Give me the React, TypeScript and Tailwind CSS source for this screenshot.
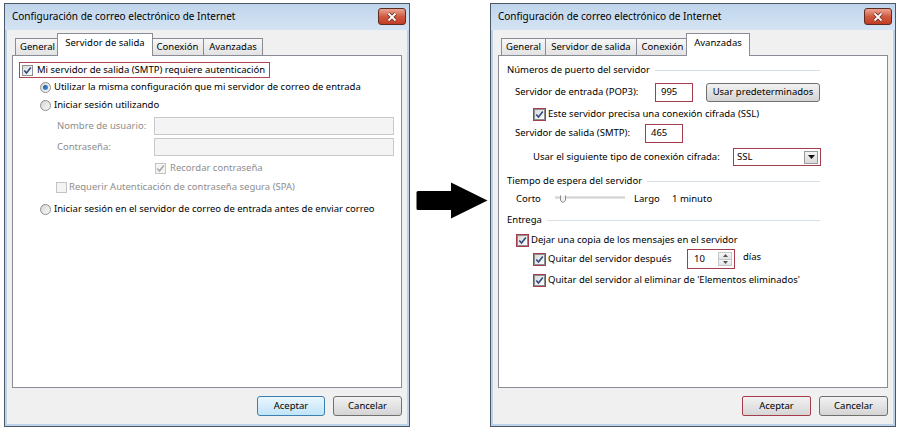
import React from 'react'

const FONT = "font-['Noto_Sans',sans-serif]"

const TABS = [
  { label: 'General', w: 'w-[45px]', ws: 'w-[49px]' },
  { label: 'Servidor de salida', w: 'w-[92px]', ws: 'w-[96px]' },
  { label: 'Conexión', w: 'w-[53px]', ws: 'w-[57px]' },
  { label: 'Avanzadas', w: 'w-[60px]', ws: 'w-[64px]' },
]

function Check({ color }: { color: string }) {
  return (
    <svg width="9" height="9" viewBox="0 0 9 9" className="block">
      <path d="M1.3 4.4 L3.5 7 L7.8 1.4" fill="none" stroke={color} strokeWidth="1.6" />
    </svg>
  )
}

function Checkbox({ checked, disabled, red }: { checked?: boolean; disabled?: boolean; red?: boolean }) {
  const box = (
    <span
      className={`flex h-[11px] w-[11px] shrink-0 items-center justify-center border ${
        disabled ? 'border-[#c4c4c4] bg-[#f4f4f4]' : 'border-[#8e8f8f] bg-gradient-to-br from-[#d9d9d9] to-white'
      }`}
    >
      {checked && <Check color={disabled ? '#a9a9a9' : '#2a4c82'} />}
    </span>
  )
  if (red) return <span className="flex shrink-0 border border-[#a53c4b]">{box}</span>
  return box
}

function Radio({ checked }: { checked?: boolean }) {
  return (
    <span className="flex h-[11px] w-[11px] shrink-0 items-center justify-center rounded-full border border-[#8e8f8f] bg-gradient-to-br from-[#d4d4d4] to-[#fbfbfb]">
      {checked && <span className="h-[5px] w-[5px] rounded-full bg-gradient-to-br from-[#154f96] to-[#4f9ee2]" />}
    </span>
  )
}

function Group({ label }: { label: string }) {
  return (
    <div className="flex h-[16px] w-[313px] items-center">
      <span>{label}</span>
      <span className="ml-[5px] h-px flex-1 bg-[#d5dfe5]" />
    </div>
  )
}

function CloseButton() {
  return (
    <div className="mt-[4px] flex h-[17px] w-[28px] items-center justify-center rounded-[3px] border border-[#5e2b22] bg-gradient-to-b from-[#e9a593] via-[#d05a40] to-[#c13c24]">
      <svg width="12" height="10" viewBox="0 0 12 10">
        <path d="M2.5 1.5 L9.5 8.5 M9.5 1.5 L2.5 8.5" stroke="#6a2c22" strokeWidth="3.4" />
        <path d="M2.5 1.5 L9.5 8.5 M9.5 1.5 L2.5 8.5" stroke="white" strokeWidth="1.8" />
      </svg>
    </div>
  )
}

function Tabs({ active }: { active: number }) {
  return (
    <div className="flex h-[22px] items-end pl-[3px]">
      {TABS.map((t, i) =>
        i === active ? (
          <div
            key={t.label}
            className={`relative z-10 -mx-[2px] -mb-px flex h-[23px] ${t.ws} shrink-0 justify-center border border-b-0 border-[#898c95] bg-white pt-[2px]`}
          >
            {t.label}
          </div>
        ) : (
          <div
            key={t.label}
            className={`-mr-px flex h-[17px] ${t.w} shrink-0 items-center justify-center border border-b-0 border-[#898c95] bg-gradient-to-b from-[#f7f7f7] to-[#e2e2e2]`}
          >
            {t.label}
          </div>
        )
      )}
    </div>
  )
}

function Dialog({ active, okRed, children }: { active: number; okRed?: boolean; children: React.ReactNode }) {
  return (
    <div className="flex h-[424px] w-[406px] shrink-0 flex-col border border-[#4a5866] bg-[#bcd3ea]">
      <div className="flex h-[26px] shrink-0 items-start justify-between bg-gradient-to-b from-[#bfd4eb] to-[#d5e4f4] pl-[7px] pr-[3px]">
        <span className="mt-[5px] text-[10px]">Configuración de correo electrónico de Internet</span>
        <CloseButton />
      </div>
      <div className="mx-[2px] mb-[2px] flex flex-1 flex-col bg-[#f0f0f0] px-[5px] pb-[8px] pt-[3px]">
        <Tabs active={active} />
        <div className="flex-1 border border-[#898c95] bg-white">{children}</div>
        <div className="mt-[8px] flex justify-end gap-[8px]">
          {okRed ? (
            <button className="h-[20px] w-[69px] rounded-[2px] border border-[#a53c4b] bg-gradient-to-b from-[#f2f2f2] to-[#d6d6d6]">
              Aceptar
            </button>
          ) : (
            <button className="h-[20px] w-[68px] rounded-[3px] border border-[#3c7fb1] bg-gradient-to-b from-[#eaf6fd] to-[#bfe4f8]">
              Aceptar
            </button>
          )}
          <button className="h-[20px] w-[69px] rounded-[3px] border border-[#707070] bg-gradient-to-b from-[#f2f2f2] to-[#d4d4d4]">
            Cancelar
          </button>
        </div>
      </div>
    </div>
  )
}

function Field({ value, w }: { value: string; w: string }) {
  return (
    <span className={`flex h-[19px] ${w} items-center border border-[#a53c4b] bg-white pl-[5px]`}>{value}</span>
  )
}

function Select() {
  return (
    <span className="flex h-[18px] w-[88px] items-center justify-between border border-[#a53c4b] bg-white pl-[3px] pr-[2px]">
      <span>SSL</span>
      <span className="flex h-[13px] w-[14px] items-center justify-center border border-[#9a9a9a] bg-gradient-to-b from-[#f4f4f4] to-[#d9d9d9]">
        <svg width="7" height="4" viewBox="0 0 7 4">
          <path d="M0 0 H7 L3.5 4 Z" fill="#111" />
        </svg>
      </span>
    </span>
  )
}

function Spin() {
  return (
    <span className="flex h-[20px] w-[48px] items-stretch border border-[#a53c4b] bg-white">
      <span className="flex flex-1 items-center pl-[6px]">10</span>
      <span className="my-[2px] mr-[2px] flex w-[14px] flex-col border border-[#c6c6c6]">
        <span className="flex flex-1 items-center justify-center border-b border-[#c6c6c6] bg-gradient-to-b from-[#f6f6f6] to-[#e4e4e4]">
          <svg width="5" height="3" viewBox="0 0 5 3">
            <path d="M0 3 H5 L2.5 0 Z" fill="#555" />
          </svg>
        </span>
        <span className="flex flex-1 items-center justify-center bg-gradient-to-b from-[#f6f6f6] to-[#e4e4e4]">
          <svg width="5" height="3" viewBox="0 0 5 3">
            <path d="M0 0 H5 L2.5 3 Z" fill="#555" />
          </svg>
        </span>
      </span>
    </span>
  )
}

function Slider() {
  return (
    <svg width="70" height="14" viewBox="0 0 70 14" className="block">
      <rect x="0" y="5" width="70" height="2" fill="#e4e4e4" />
      <line x1="0" y1="5" x2="70" y2="5" stroke="#c4c4c4" strokeWidth="1" />
      <path d="M5.5 3.5 V8.5 L8 10.5 L10.5 8.5 V3.5" fill="#f3f3f3" stroke="#8a8a8a" strokeWidth="1" />
    </svg>
  )
}

function Arrow() {
  return (
    <svg width="72" height="37" viewBox="0 0 72 37" className="block">
      <path d="M2 9 H35 V0.5 L71.5 18.5 L35 36.5 V28 H2 Q0.5 28 0.5 26.5 V10.5 Q0.5 9 2 9 Z" fill="#000" />
    </svg>
  )
}

function OutgoingTab() {
  const gray = 'text-[#8d8d8d]'
  return (
    <div className="flex flex-col items-start pl-[6px] pt-[6px]">
      <div className="flex h-[16px] min-w-[251px] items-center border border-[#b2434f] pl-[2px] pr-[3px]">
        <Checkbox checked />
        <span className="ml-[4px]">Mi servidor de salida (SMTP) requiere autenticación</span>
      </div>
      <div className="flex h-[18px] items-center pl-[21px]">
        <Radio checked />
        <span className="ml-[3px]">Utilizar la misma configuración que mi servidor de correo de entrada</span>
      </div>
      <div className="flex h-[18px] items-center pl-[21px]">
        <Radio />
        <span className="ml-[3px]">Iniciar sesión utilizando</span>
      </div>
      <div className={`mt-[3px] flex h-[18px] items-center pl-[38px] ${gray}`}>
        <span className="w-[97px]">Nombre de usuario:</span>
        <span className="h-[18px] w-[240px] border border-[#c9c9c9] bg-[#f4f4f4]" />
      </div>
      <div className={`mt-[3px] flex h-[18px] items-center pl-[38px] ${gray}`}>
        <span className="w-[97px]">Contraseña:</span>
        <span className="h-[18px] w-[240px] border border-[#c9c9c9] bg-[#f4f4f4]" />
      </div>
      <div className={`mt-[3px] flex h-[18px] items-center pl-[136px] ${gray}`}>
        <Checkbox checked disabled />
        <span className="ml-[4px]">Recordar contraseña</span>
      </div>
      <div className={`mt-[1px] flex h-[18px] items-center pl-[37px] ${gray}`}>
        <Checkbox disabled />
        <span className="ml-[2px]">Requerir Autenticación de contraseña segura (SPA)</span>
      </div>
      <div className="mt-[4px] flex h-[18px] items-center pl-[21px]">
        <Radio />
        <span className="ml-[3px]">Iniciar sesión en el servidor de correo de entrada antes de enviar correo</span>
      </div>
    </div>
  )
}

function AdvancedTab() {
  return (
    <div className="flex flex-col pl-[8px] pt-[6px]">
      <Group label="Números de puerto del servidor" />
      <div className="mt-[5px] flex h-[19px] items-center pl-[8px]">
        <span className="w-[140px]">Servidor de entrada (POP3):</span>
        <Field value="995" w="w-[38px]" />
        <button className="ml-[13px] h-[19px] w-[114px] rounded-[3px] border border-[#707070] bg-gradient-to-b from-[#f2f2f2] to-[#d4d4d4]">
          Usar predeterminados
        </button>
      </div>
      <div className="mt-[3px] flex h-[18px] items-center pl-[26px]">
        <Checkbox checked red />
        <span className="ml-[2px]">Este servidor precisa una conexión cifrada (SSL)</span>
      </div>
      <div className="mt-[1px] flex h-[19px] items-center pl-[8px]">
        <span className="w-[130px]">Servidor de salida (SMTP):</span>
        <Field value="465" w="w-[38px]" />
      </div>
      <div className="mt-[5px] flex h-[18px] items-center pl-[26px]">
        <span className="w-[200px]">Usar el siguiente tipo de conexión cifrada:</span>
        <Select />
      </div>
      <div className="mt-[7px]">
        <Group label="Tiempo de espera del servidor" />
      </div>
      <div className="mt-[2px] flex h-[16px] items-center pl-[9px]">
        <span className="w-[39px]">Corto</span>
        <Slider />
        <span className="ml-[9px] w-[38px]">Largo</span>
        <span>1 minuto</span>
      </div>
      <div className="mt-[5px]">
        <Group label="Entrega" />
      </div>
      <div className="mt-[3px] flex h-[18px] items-center pl-[9px]">
        <Checkbox checked red />
        <span className="ml-[2px]">Dejar una copia de los mensajes en el servidor</span>
      </div>
      <div className="flex h-[20px] items-center pl-[26px]">
        <span className="flex w-[154px] items-center">
          <Checkbox checked red />
          <span className="ml-[2px]">Quitar del servidor después</span>
        </span>
        <Spin />
        <span className="ml-[8px] -mt-[3px]">días</span>
      </div>
      <div className="mt-[2px] flex h-[18px] items-center pl-[26px]">
        <Checkbox checked red />
        <span className="ml-[2px]">Quitar del servidor al eliminar de 'Elementos eliminados'</span>
      </div>
    </div>
  )
}

export default function App() {
  return (
    <div className={`flex h-[431px] w-[903px] items-start bg-white pl-[4px] pt-[3px] text-[9.5px] text-black ${FONT}`}>
      <Dialog active={1}>
        <OutgoingTab />
      </Dialog>
      <div className="ml-[6px] mr-[2px] mt-[179px]">
        <Arrow />
      </div>
      <Dialog active={3} okRed>
        <AdvancedTab />
      </Dialog>
    </div>
  )
}
